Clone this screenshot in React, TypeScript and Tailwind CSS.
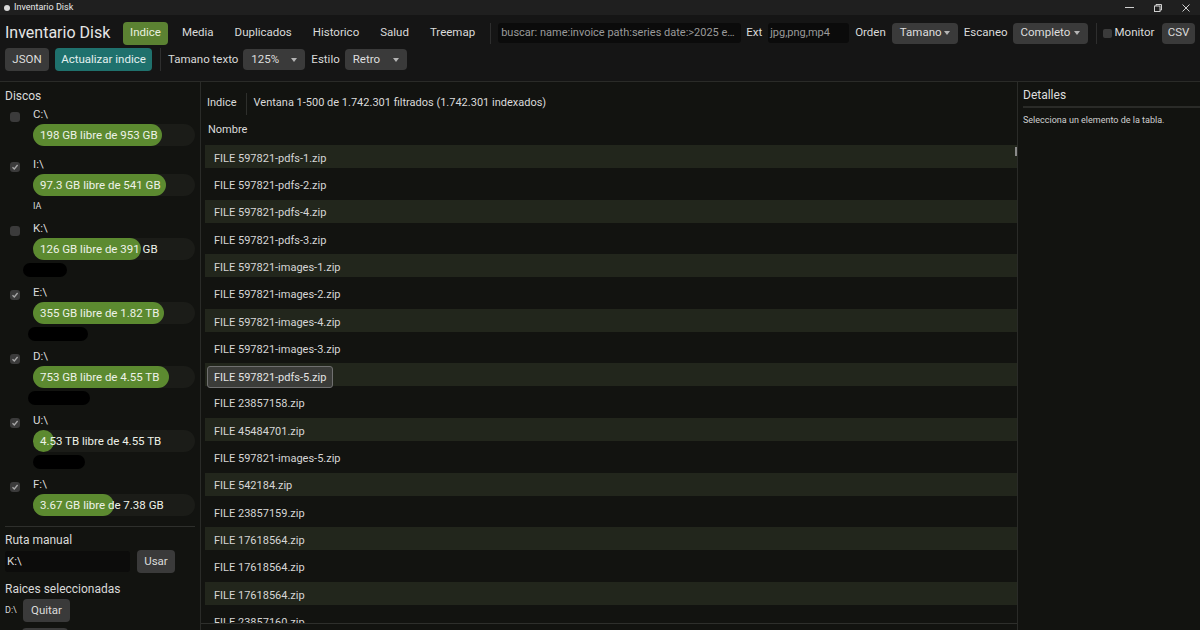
import React from 'react'

const tabs = ['Indice', 'Media', 'Duplicados', 'Historico', 'Salud', 'Treemap']

// fill = used part of the 162px track
const disks = [
    { name: 'C:\\', text: '198 GB libre de 953 GB', fill: 129, checked: false, sub: null as string | null, blob: '' },
    { name: 'I:\\', text: '97.3 GB libre de 541 GB', fill: 133, checked: true, sub: 'IA', blob: '' },
    { name: 'K:\\', text: '126 GB libre de 391 GB', fill: 108, checked: false, sub: null, blob: 'ml-[-10px] w-[44px]' },
    { name: 'E:\\', text: '355 GB libre de 1.82 TB', fill: 131, checked: true, sub: null, blob: 'ml-[-5px] w-[60px]' },
    { name: 'D:\\', text: '753 GB libre de 4.55 TB', fill: 136, checked: true, sub: null, blob: 'ml-[-5px] w-[62px]' },
    { name: 'U:\\', text: '4.53 TB libre de 4.55 TB', fill: 21, checked: true, sub: null, blob: 'ml-[0px] w-[52px]' },
    { name: 'F:\\', text: '3.67 GB libre de 7.38 GB', fill: 81, checked: true, sub: null, blob: '' },
]

const files = [
    'FILE 597821-pdfs-1.zip',
    'FILE 597821-pdfs-2.zip',
    'FILE 597821-pdfs-4.zip',
    'FILE 597821-pdfs-3.zip',
    'FILE 597821-images-1.zip',
    'FILE 597821-images-2.zip',
    'FILE 597821-images-4.zip',
    'FILE 597821-images-3.zip',
    'FILE 597821-pdfs-5.zip',
    'FILE 23857158.zip',
    'FILE 45484701.zip',
    'FILE 597821-images-5.zip',
    'FILE 542184.zip',
    'FILE 23857159.zip',
    'FILE 17618564.zip',
    'FILE 17618564.zip',
    'FILE 17618564.zip',
    'FILE 23857160.zip',
]

const Caret = () => (
    <span className="w-0 h-0 border-l-[3.5px] border-r-[3.5px] border-t-[4px] border-l-transparent border-r-transparent border-t-[#b5b5b5]" />
)

const Dropdown = ({ label, w }: { label: string, w: string }) => (
    <div className={`${w} h-[21px] flex items-center justify-between px-[8px] bg-[#3a3a3a] rounded-[4px] text-[#dedede]`}>
        <span>{label}</span>
        <Caret />
    </div>
)

const Check = ({ checked }: { checked: boolean }) => (
    <div className="w-[10px] h-[10px] rounded-[3px] bg-[#3b3b3b] flex items-center justify-center">
        {checked && (
            <svg width="8" height="8" viewBox="0 0 8 8">
                <polyline points="1.5,4.2 3.3,6 6.6,2" fill="none" stroke="#a8a8a8" strokeWidth="1.3" />
            </svg>
        )}
    </div>
)

const App = () => {
    return (
        <div className="w-[1200px] h-[630px] flex flex-col overflow-hidden bg-[#121310] text-[#dadada] font-['Roboto','Noto_Sans',sans-serif]">
            {/* title bar */}
            <div className="h-[15px] flex items-center bg-[#1f1f1f] px-[4px] text-[9px] text-[#e8e8e8]">
                <span className="w-[6px] h-[6px] rounded-full bg-[#d8d8d8] mr-[4px]" />
                <span>Inventario Disk</span>
                <div className="ml-auto flex items-center gap-[20px] pr-[6px] text-[#cfcfcf]">
                    <span className="w-[9px] h-px bg-[#cfcfcf]" />
                    <svg width="8" height="8" viewBox="0 0 8 8">
                        <rect x="0.5" y="2" width="5.5" height="5.5" fill="none" stroke="#cfcfcf" />
                        <path d="M2 2V0.5H7.5V6H6" fill="none" stroke="#cfcfcf" />
                    </svg>
                    <svg width="8" height="8" viewBox="0 0 8 8">
                        <path d="M0.5 0.5L7.5 7.5M7.5 0.5L0.5 7.5" stroke="#cfcfcf" strokeWidth="1" />
                    </svg>
                </div>
            </div>

            {/* toolbar */}
            <div className="bg-[#151515] px-[5px] pt-[6px] pb-[10px] border-b border-[#2a2b28] text-[11.5px]">
                <div className="h-[24px] flex items-center whitespace-nowrap">
                    <span className="w-[118px] shrink-0 text-[16px] text-[#e6e6e6]">Inventario Disk</span>
                    <div className="flex items-center gap-[7px] shrink-0">
                        {tabs.map((t) => (
                            <div key={t} className={`h-[23px] px-[7px] flex items-center rounded-[4px] ${t === 'Indice' ? 'bg-[#5b8232] text-[#e9f0df]' : 'text-[#dadada]'}`}>
                                {t}
                            </div>
                        ))}
                    </div>
                    <span className="ml-[8px] w-px h-[21px] shrink-0 bg-[#2e2e2e]" />
                    <div className="ml-[7px] w-[243px] shrink-0 h-[20px] flex items-center px-[3px] bg-[#0b0b0b] rounded-[3px] text-[11px] text-[#9a9a9a] overflow-hidden">
                        <span className="truncate">buscar: name:invoice path:series date:&gt;2025 e…</span>
                    </div>
                    <span className="ml-[5px] shrink-0">Ext</span>
                    <div className="ml-[6px] w-[81px] shrink-0 h-[20px] flex items-center px-[2px] bg-[#0b0b0b] rounded-[3px] text-[11px] text-[#9a9a9a]">jpg,png,mp4</div>
                    <span className="ml-[6px] shrink-0">Orden</span>
                    <div className="ml-[6px] shrink-0"><Dropdown label="Tamano" w="w-[66px]" /></div>
                    <span className="ml-[6px] shrink-0">Escaneo</span>
                    <div className="ml-[5px] shrink-0"><Dropdown label="Completo" w="w-[75px]" /></div>
                    <span className="ml-[8px] w-px h-[21px] shrink-0 bg-[#2e2e2e]" />
                    <span className="ml-[6px] w-[9px] h-[9px] shrink-0 rounded-[2px] bg-[#3b3b3b]" />
                    <span className="ml-[3px] shrink-0">Monitor</span>
                    <div className="ml-auto w-[33px] shrink-0 h-[21px] flex items-center justify-center bg-[#3a3a3a] rounded-[4px]">CSV</div>
                </div>
                <div className="mt-[3px] h-[23px] flex items-center">
                    <div className="w-[44px] h-[23px] flex items-center justify-center bg-[#3a3a3a] rounded-[4px] text-[#dedede]">JSON</div>
                    <div className="ml-[6px] w-[97px] h-[23px] flex items-center justify-center bg-[#1f716d] rounded-[4px] text-[#e4f0ef]">Actualizar indice</div>
                    <span className="ml-[8px] w-px h-[23px] bg-[#2e2e2e]" />
                    <span className="ml-[7px]">Tamano texto</span>
                    <div className="ml-[5px]"><Dropdown label="125%" w="w-[62px]" /></div>
                    <span className="ml-[6px]">Estilo</span>
                    <div className="ml-[5px]"><Dropdown label="Retro" w="w-[62px]" /></div>
                </div>
            </div>

            {/* main */}
            <div className="flex-1 flex min-h-0">
                {/* left: discos */}
                <div className="w-[201px] border-r border-[#2a2b28] px-[5px] pt-[7px] overflow-hidden text-[11.5px]">
                    <div className="h-[14px] leading-[14px] text-[12px]">Discos</div>
                    <div className="mt-[4px] flex flex-col gap-[8px]">
                        {disks.map((d) => (
                            <div key={d.name} className="flex">
                                <div className="ml-[5px] mt-[5px]"><Check checked={d.checked} /></div>
                                <div className="ml-[13px] flex flex-col">
                                    <div className="h-[14px] leading-[14px]">{d.name}</div>
                                    <div className="relative mt-[3px] w-[162px] h-[22px] rounded-full bg-[#1b1c18]">
                                        <div className="h-full rounded-full bg-[#5c8a30]" style={{ width: d.fill }} />
                                        <span className="absolute left-[7px] top-0 h-[22px] leading-[22px] whitespace-nowrap text-[#eef2e8]">{d.text}</span>
                                    </div>
                                    {d.sub && <div className="mt-[3px] h-[14px] leading-[14px] text-[9px]">{d.sub}</div>}
                                    {d.blob && <div className={`mt-[3px] h-[14px] rounded-full bg-black ${d.blob}`} />}
                                    {!d.sub && !d.blob && d.name === 'C:\\' && <div className="h-[3px]" />}
                                </div>
                            </div>
                        ))}
                    </div>
                    <div className="mt-[10px] border-t border-[#2e2f2c]" />
                    <div className="mt-[6px] h-[14px] leading-[14px] text-[12px]">Ruta manual</div>
                    <div className="mt-[3px] flex items-center">
                        <div className="w-[125px] h-[21px] flex items-center px-[2px] bg-[#0c0c0b] rounded-[3px]">K:\</div>
                        <div className="ml-[7px] w-[38px] h-[23px] flex items-center justify-center bg-[#3a3a3a] rounded-[4px]">Usar</div>
                    </div>
                    <div className="mt-[9px] h-[14px] leading-[14px] text-[12px]">Raices seleccionadas</div>
                    <div className="mt-[3px] flex items-center">
                        <span className="w-[18px] text-[9px]">D:\</span>
                        <div className="w-[47px] h-[23px] flex items-center justify-center bg-[#3a3a3a] rounded-[4px]">Quitar</div>
                    </div>
                    <div className="mt-[6px] ml-[17px] w-[46px] h-[23px] bg-[#3a3a3a] rounded-[4px]" />
                </div>

                {/* center: indice */}
                <div className="flex-1 flex flex-col min-w-0 border-r border-[#2a2b28] text-[11px]">
                    <div className="pl-[6px] pt-[10px] h-[33px] flex items-center">
                        <span className="h-[22px] flex items-center">Indice</span>
                        <span className="ml-[9px] w-px h-[22px] bg-[#2e2f2c]" />
                        <span className="ml-[7px]">Ventana 1-500 de 1.742.301 filtrados (1.742.301 indexados)</span>
                    </div>
                    <div className="mt-[8px] pl-[7px] h-[14px] leading-[14px]">Nombre</div>
                    <div className="relative mt-[8px] flex-1 min-h-0 overflow-hidden pl-[4px]">
                        <span className="absolute right-0 top-[2px] w-[2px] h-[9px] bg-[#8a8a8a]" />
                        {files.map((f, i) => (
                            <div key={i} className="h-[27.3px]">
                                <div className={`h-[23px] flex items-center ${i % 2 === 0 ? 'bg-[#22261c]' : ''}`}>
                                    {i === 8 ? (
                                        <div className="ml-[2px] mt-[4px] h-[22px] flex items-center pt-[2px] px-[6px] border border-[#707070] rounded-[3px] bg-[#3b3c39] text-[#e4e4e4]">{f}</div>
                                    ) : (
                                        <span className="pl-[9px] pt-[5px] text-[#d6d6d6]">{f}</span>
                                    )}
                                </div>
                            </div>
                        ))}
                    </div>
                    <div className="h-[7px] border-t border-[#2e2f2c]" />
                </div>

                {/* right: detalles */}
                <div className="w-[182px] pl-[5px] pt-[6px]">
                    <div className="h-[14px] leading-[14px] text-[12px] text-[#dedede]">Detalles</div>
                    <div className="mt-[4px] h-[2px] bg-[#2a2b28]" />
                    <div className="mt-[6px] h-[12px] leading-[12px] text-[9px] text-[#d0d0d0]">Selecciona un elemento de la tabla.</div>
                </div>
            </div>
        </div>
    )
}

export default App
